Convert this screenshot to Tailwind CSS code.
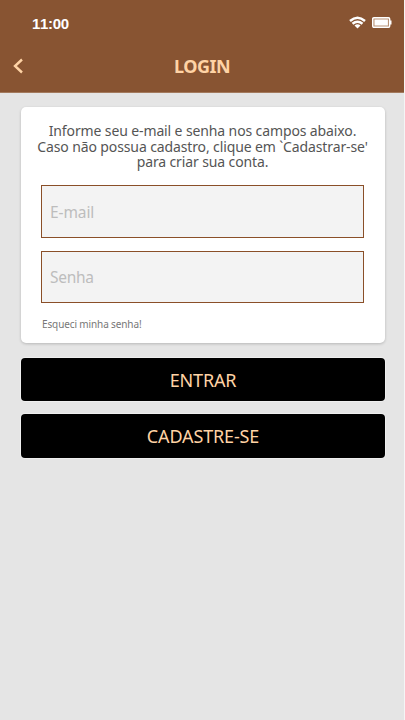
<!DOCTYPE html>
<html lang="pt-BR">
<head>
<meta charset="utf-8">
<title>Login</title>
<script src="https://cdn.jsdelivr.net/npm/@tailwindcss/browser@4"></script>
</head>
<body class="h-[720px] overflow-hidden bg-[#f5f5f5] font-['Noto_Sans','Open_Sans',sans-serif]">
<div class="flex h-full w-[404px] flex-col bg-[#e5e5e5]">
  <header class="h-[93px] shrink-0 border-b border-[#a37a5d] bg-[#885432]">
    <div class="flex h-[46px] items-center justify-between pr-[12px] pl-[32px]">
      <span class="font-['Liberation_Sans',sans-serif] text-[15px] leading-none font-bold tracking-[-0.300px] text-white [font-kerning:none]">11:00</span>
      <div class="flex items-center gap-[6px] pb-[2px]">
        <svg class="h-[13px] w-[17px]" viewBox="0 0 17 13" fill="none" stroke="#fff" stroke-width="2.5"><path d="M1 5Q8.500-1.400 16 5M3.500 7.800Q8.500 3.600 13.500 7.800"/><path d="M5.500 9.500Q8.500 7.200 11.500 9.500L8.500 12.600Z" fill="#fff" stroke="none"/></svg>
        <svg class="h-[11px] w-[20px]" viewBox="0 0 20 11"><rect x=".7" y=".7" width="17" height="9.600" rx="1.200" fill="#b99276" stroke="#fff" stroke-width="1.400"/><rect x="2.500" y="2.500" width="13.400" height="6" fill="#fff"/><path d="M18 3.500h1.500v4H18z" fill="#fff"/></svg>
      </div>
    </div>
    <div class="grid h-[40px] grid-cols-[40px_1fr_40px] items-center">
      <svg class="ml-[13px] h-[16px] w-[11px]" viewBox="0 0 11 16" fill="none" stroke="#ffd3a5" stroke-width="2.400"><path d="M9 1.500 2 8l7 6.500"/></svg>
      <h1 class="text-center text-[18px] leading-none font-bold tracking-[-0.500px] text-[#ffd3a5]">LOGIN</h1>
    </div>
  </header>
  <main class="flex flex-col pt-[14px] pr-[19px] pl-[21px]">
    <section class="h-[236px] rounded-[5px] bg-white pr-[21px] pl-[20px] pt-[16px] shadow-[0_1px_3px_rgba(0,0,0,0.2)]">
      <p class="-mx-[12px] text-center text-[14px] leading-[15.700px] tracking-[-0.12px] whitespace-nowrap text-[#555]">Informe seu e-mail e senha nos campos abaixo.<br>Caso não possua cadastro, clique em `Cadastrar-se'<br>para criar sua conta.</p>
      <input type="text" placeholder="E-mail" class="mt-[15px] block h-[53px] w-[323px] border border-solid border-[#8a4f28] bg-[#f3f3f3] px-[8px] text-[15.500px] tracking-[-0.100px] placeholder:text-[#bdbdbd]">
      <input type="password" placeholder="Senha" class="mt-[13px] block h-[52px] w-[323px] border border-solid border-[#8a4f28] bg-[#f3f3f3] px-[8px] text-[15.500px] tracking-[-0.300px] placeholder:text-[#bdbdbd]">
      <a class="mt-[14px] ml-[1px] block text-[10px] leading-[14px] tracking-[-0.12px] text-[#777]">Esqueci minha senha!</a>
    </section>
    <button class="mt-[15px] h-[43px] rounded-[4px] bg-black pt-[1px] text-[18px] tracking-[-0.2px] text-[#ffd3a5] shadow-[0_0_0_1px_rgba(255,255,255,0.4)]">ENTRAR</button>
    <button class="mt-[13px] h-[44px] rounded-[4px] bg-black text-[18px] tracking-[-0.15px] text-[#ffd3a5] shadow-[0_0_0_1px_rgba(255,255,255,0.4)]">CADASTRE-SE</button>
  </main>
</div>
</body>
</html>
